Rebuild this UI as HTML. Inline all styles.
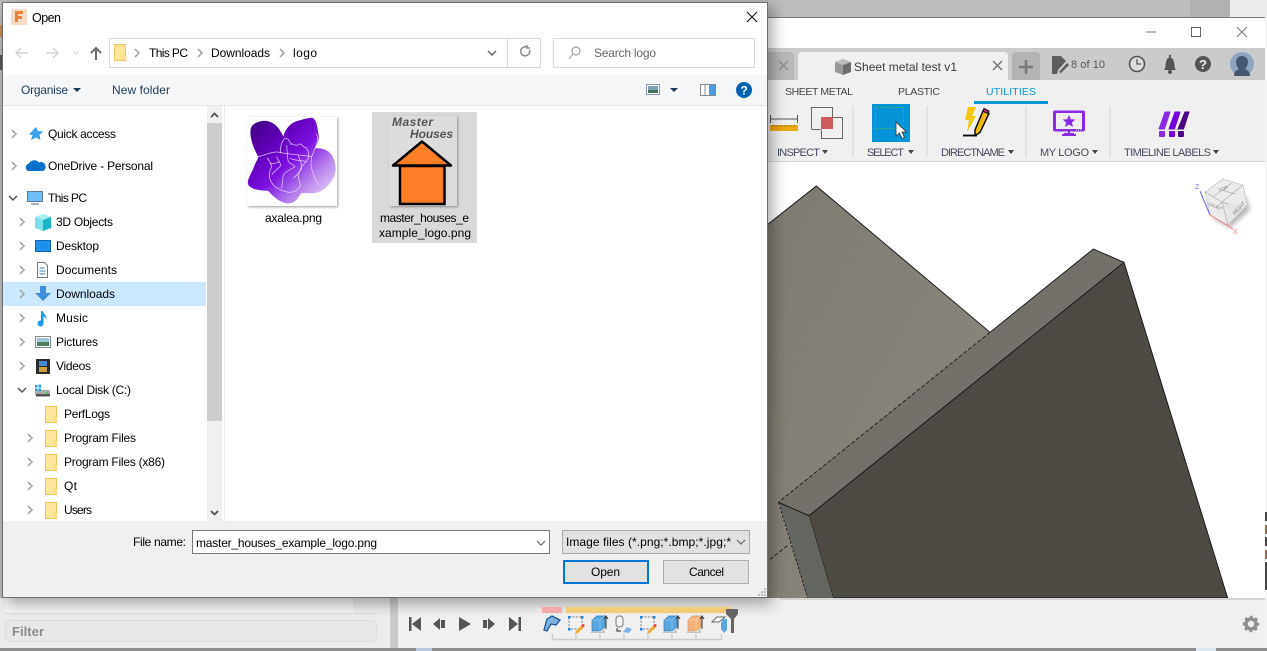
<!DOCTYPE html>
<html><head><meta charset="utf-8"><title>Open</title>
<style>
html,body{margin:0;padding:0;background:#fff;width:1267px;height:651px;overflow:hidden}
svg{display:block}
text{font-family:"Liberation Sans",sans-serif;font-size:12px;fill:#000}
.f{font-size:11px;fill:#444a5c}
</style></head><body>
<svg width="1267" height="651" viewBox="0 0 1267 651" xmlns="http://www.w3.org/2000/svg">
<defs>
<filter id="b7" x="-10%" y="-10%" width="120%" height="120%"><feGaussianBlur stdDeviation="7"/></filter>
<filter id="b1" x="-20%" y="-20%" width="140%" height="140%"><feGaussianBlur stdDeviation="1.200"/></filter>
<filter id="b2" x="-40%" y="-40%" width="180%" height="180%"><feGaussianBlur stdDeviation="2.500"/></filter>
<linearGradient id="fl" x1="0" y1="0" x2="1" y2="1"><stop offset="0" stop-color="#3c007a"/><stop offset=".3" stop-color="#6200bc"/><stop offset=".5" stop-color="#7d10e0"/><stop offset=".72" stop-color="#b785ec"/><stop offset="1" stop-color="#f6eeff"/></linearGradient>
<linearGradient id="pl" x1="0" y1="0" x2="1" y2="1"><stop offset="0" stop-color="#7f7b72"/><stop offset="1" stop-color="#8b887f"/></linearGradient>
<g id="fd"><path d="M.5.5H11.5V16.500H.5Z" fill="#ffe69a" stroke="#eac85e"/><path d="M10 11h2v6h-2z" fill="#fff2c4" stroke="#eac85e" stroke-width=".7"/></g>
<path id="cr" d="M0 0l4 4-4 4" fill="none" stroke="#a6a6a6" stroke-width="1.600"/>
<g id="bx"><path d="M0 4L5 0H13V11L8 15H0Z" fill="#5aa7e0" stroke="#2f7ab8" stroke-width=".7"/><path d="M0 4H8V15M8 4L13 0" fill="none" stroke="#8cc6ef" stroke-width=".7"/><path d="M-1 16H9L13 13V17H-1Z" fill="#c4c4c4"/></g>
<g id="sk"><path d="M1 1H14V13H1Z" fill="none" stroke="#777" stroke-dasharray="2 1.400"/><path d="M0 0h2.500v2.500H0zM13 0h2.500v2.500H13zM0 12h2.500v2.500H0z" fill="#1b86e0"/><path d="M8 15L14 9l2 2-6 6-3 1z" fill="#f0a732"/><circle cx="15" cy="9.500" r="1.500" fill="#e8413c"/></g>
</defs>

<!-- background behind -->
<rect width="1267" height="651" fill="#b9b9b9"/>
<rect x="0" y="0" width="1190" height="18" fill="#bcbcbc"/>
<rect x="1190" y="0" width="40" height="18" fill="#b0b0b0"/>
<rect x="1230" y="0" width="37" height="18" fill="#ededed"/>
<rect x="1265" y="18" width="2" height="633" fill="#f4f4f4"/>
<rect x="1265" y="512" width="2" height="9" fill="#444"/><rect x="1265" y="525" width="2" height="9" fill="#a8654a"/><rect x="1265" y="537" width="2" height="9" fill="#444"/><rect x="1265" y="550" width="2" height="9" fill="#a8654a"/><rect x="1265" y="562" width="2" height="28" fill="#444"/>
<rect x="0" y="55" width="2" height="15" fill="#555"/><rect x="0" y="25" width="2" height="12" fill="#c98a4b"/>

<!-- Fusion window -->
<rect x="767" y="17" width="498" height="631" fill="#fff"/>
<rect x="767" y="17" width="498" height="1" fill="#777"/>
<path d="M1146 32h10" stroke="#777" stroke-width="1"/>
<rect x="1191.500" y="27.500" width="9" height="9" fill="none" stroke="#666"/>
<path d="M1237 27l10 10M1247 27l-10 10" stroke="#777" stroke-width="1"/>
<rect x="767" y="48" width="498" height="32" fill="#cbcbcb"/>
<path d="M767 52h23a4 4 0 0 1 4 4v24h-27z" fill="#b7b7b7"/>
<path d="M779 61l9 9M788 61l-9 9" stroke="#8e8e8e" stroke-width="1.500"/>
<path d="M798 80V56a4 4 0 0 1 4-4h202a4 4 0 0 1 4 4v24z" fill="#f0f0f0"/>
<path d="M835 62l8-3 8 3v10l-8 3-8-3z" fill="#9a9a9a"/><path d="M843 65l8-3v10l-8 3z" fill="#6e6e6e"/><path d="M835 62l8-3 8 3-8 3z" fill="#bdbdbd"/>
<text x="854" y="71" textLength="103" style="fill:#3c3c3c">Sheet metal test v1</text>
<path d="M993 61l9 9M1002 61l-9 9" stroke="#777" stroke-width="1.500"/>
<path d="M1012 80V56a4 4 0 0 1 4-4h20a4 4 0 0 1 4 4v24z" fill="#b3b3b3"/>
<path d="M1026 60v14M1019 67h14" stroke="#7a7a7a" stroke-width="2.500"/>
<path d="M1052 56h9l5 5-8 9-1 4h-5z" fill="#5e5e5e"/><path d="M1059 72l8-9 2 2-8 8z" fill="#5e5e5e"/>
<text x="1071" y="68" textLength="34" style="font-size:11px;fill:#555">8 of 10</text>
<circle cx="1137" cy="64" r="7.500" fill="#dcdcdc" stroke="#555" stroke-width="1.600"/><path d="M1137 59v5h4" fill="none" stroke="#555" stroke-width="1.300"/>
<path d="M1164 70c2-2 1-4 2-8 .5-3 2-4 4-5 2 1 3.500 2 4 5 1 4 0 6 2 8z" fill="#555"/><circle cx="1170" cy="72" r="2" fill="#555"/><circle cx="1170" cy="56" r="1.200" fill="#555"/>
<circle cx="1203" cy="64" r="8" fill="#555"/><text x="1199" y="69" style="font-size:13px;font-weight:bold;fill:#eee">?</text>
<circle cx="1242" cy="64" r="12" fill="#8fa4bf"/><path d="M1234 76c0-5 3-6 5-7-2-2-3-5-3-7 0-4 3-6 6-6s6 2 6 6c0 2-1 5-3 7 2 1 5 2 5 7z" fill="#45566f"/>

<!-- Toolbar -->
<rect x="767" y="80" width="498" height="81" fill="#f0f0f0"/>
<rect x="767" y="161" width="498" height="1" fill="#d8d8d8"/>
<text x="785" y="95" textLength="68" style="font-size:10.500px;fill:#444">SHEET METAL</text>
<text x="898" y="95" textLength="42" style="font-size:10.500px;fill:#444">PLASTIC</text>
<text x="986" y="95" textLength="50" style="font-size:10.500px;fill:#0696d7">UTILITIES</text>
<rect x="974" y="101" width="74" height="3" fill="#0696d7"/>
<path d="M853 106v51M927 106v51M1026 106v51M1110 106v51" stroke="#dcdcdc" stroke-width="1.500"/>
<path d="M770.500 115v8M797.500 115v8M771 119h26" stroke="#555" stroke-width="1" fill="none"/>
<rect x="770" y="125" width="28" height="6" fill="#f0a90f"/>
<path d="M773 125v2M776 125v2M779 125v2M782 125v2M785 125v2M788 125v2M791 125v2M794 125v2" stroke="#8a6500" stroke-width=".7"/>
<path d="M811.500 129V107.500H832.500V117M821 129.500H811.500M842.500 117.500H833M842.500 117.500V138.500H821.500V130" fill="none" stroke="#666"/>
<rect x="821" y="117" width="12" height="12" fill="#cd5c5c"/>
<rect x="872" y="104" width="38" height="38" fill="#0696d7"/>
<rect x="875.500" y="107.500" width="28" height="21" fill="none" stroke="#3cb56c" stroke-dasharray="3 2"/>
<path d="M896 122v14l3.500-3 2.500 5.500 2.500-1-2.500-5.500h4.500z" fill="#fff" stroke="#333" stroke-width=".8"/>
<path d="M968 107h8l-4 9h4l-9 16 2-12h-4z" fill="#f6c70a"/>
<path d="M975 130l8-19 6 2.500-9 19-5 3z" fill="#f2b90c" stroke="#111" stroke-width="1.500"/><path d="M983 111l1-2.500 5 2.500-1 2.500z" fill="#d0128c" stroke="#111"/>
<path d="M963 135.500h14" stroke="#000" stroke-width="1.800"/>
<path d="M1055 110.500h28a2 2 0 0 1 2 2v17a2 2 0 0 1-2 2h-28a2 2 0 0 1-2-2v-17a2 2 0 0 1 2-2zM1056 113v16h26v-16z" fill="#8a2be2" fill-rule="evenodd"/>
<path d="M1069 131v3M1062 135h14" stroke="#8a2be2" stroke-width="2"/><path d="M1064 133h10v2h-10z" fill="#8a2be2"/>
<path d="M1069 115l1.800 4.200 4.600.3-3.500 3 1.100 4.500-4-2.400-4 2.400 1.100-4.500-3.500-3 4.600-.3z" fill="#8a2be2"/>
<path d="M1076 130h5" stroke="#fff" stroke-dasharray="1 1"/>
<path d="M1165 112h5l-5.500 17h-5.500z" fill="#8a2be2" stroke="#8a2be2" stroke-linejoin="round"/>
<path d="M1175 112h5l-5.500 17h-5.500z" fill="#7600dd" stroke="#7600dd" stroke-linejoin="round"/>
<path d="M1185 112h4l-5.500 17h-5.500z" fill="#4b0082" stroke="#4b0082" stroke-linejoin="round"/>
<rect x="1159" y="131" width="6" height="6" rx="1" fill="#8a2be2"/><rect x="1169" y="131" width="6" height="6" rx="1" fill="#7600dd"/><rect x="1178" y="131" width="6" height="6" rx="1" fill="#4b0082"/>
<text class="f" x="777" y="156" textLength="43">INSPECT</text><path d="M822 150h6l-3 4z" fill="#444"/>
<text class="f" x="867" y="156" textLength="37">SELECT</text><path d="M908 150h6l-3 4z" fill="#444"/>
<text class="f" x="941" y="156" textLength="64">DIRECTNAME</text><path d="M1008 150h6l-3 4z" fill="#444"/>
<text class="f" x="1040" y="156" textLength="49">MY LOGO</text><path d="M1092 150h6l-3 4z" fill="#444"/>
<text class="f" x="1124" y="156" textLength="87">TIMELINE LABELS</text><path d="M1213 150h6l-3 4z" fill="#444"/>

<!-- Model -->
<path d="M767 225L816.300 186 990 332.300 778 503 808 598H767Z" fill="url(#pl)"/>
<path d="M767 225L816.300 186 990 332.300" fill="none" stroke="#111" stroke-width=".9"/>
<path d="M778.300 502.300L1093.300 249 1124 262.300 809 515.700Z" fill="#74716a"/>
<path d="M1124 262.300L809 515.700 833.300 598H1227.700Z" fill="#4e4b44" stroke="#111" stroke-width=".9"/>
<path d="M778.300 502.300L809 515.700 833.300 598H807.700Z" fill="#636560"/>
<path d="M990 332.300L1093.300 249 1124 262.300" fill="none" stroke="#111" stroke-width=".9"/>
<path d="M990 332.300L778.300 502.300" fill="none" stroke="#111" stroke-width=".8" stroke-dasharray="4 2"/>
<path d="M778.300 502.300L809 515.700" stroke="#111" stroke-width=".9"/>
<path d="M778.300 502.300L807.700 598" stroke="#111" stroke-width=".8" stroke-dasharray="3 1.500"/>
<path d="M770 559.300L788.300 545" stroke="#111" stroke-width=".8" stroke-dasharray="4 2"/>

<!-- view cube -->
<path d="M1212 218L1230 228 1250 210 1246 196Z" fill="#000" opacity=".28" filter="url(#b2)"/>
<path d="M1205 192L1223 179 1243 185 1247 205 1228 225 1210 215Z" fill="#ececec" stroke="#b5b5b5" stroke-width=".8" stroke-dasharray="2.500 1"/>
<path d="M1222 202L1247 205 1228 225Z" fill="#e2e2e2" opacity=".7"/>
<path d="M1205 192L1222 202 1243 185M1222 202L1228 225M1214 196L1232 183M1222 190L1235 194M1216 208L1222 202 1228 204" fill="none" stroke="#aaa" stroke-width=".7"/>
<path d="M1200 191L1210 215" fill="none" stroke="#6f6fe8" stroke-width="1.100"/>
<path d="M1210 215L1233 229" stroke="#ef8f8f" stroke-width="1.100"/>
<text x="1195" y="189" style="font-size:7px;font-weight:bold;fill:#9a9af2">Z</text>
<text x="1233" y="234" style="font-size:7px;font-weight:bold;fill:#f5a8a8">X</text>
<text x="1229" y="212" transform="rotate(-48 1236 207)" textLength="16" style="font-size:5.500px;fill:#888;font-style:italic">RIGHT</text>
<text x="1207" y="208" transform="rotate(22 1215 208)" textLength="15" style="font-size:4.500px;fill:#888">FRONT</text>
<text x="1218" y="191" transform="rotate(-20 1222 189)" style="font-size:5px;fill:#888">TOP</text>

<!-- left lower panel -->
<rect x="0" y="598" width="390" height="50" fill="#ececec"/>
<rect x="5" y="598" width="348" height="15" fill="#f6f6f6"/>
<rect x="5" y="613" width="372" height="1" fill="#dcdcdc"/>
<rect x="5.500" y="620.500" width="371" height="21" rx="4" fill="#e8e8e8" stroke="#dedede"/>
<text x="12" y="636" textLength="32" style="font-weight:bold;fill:#8c8c8c;font-size:13px">Filter</text>
<rect x="390" y="598" width="8" height="50" fill="#c9c9c9"/>

<!-- timeline panel -->
<rect x="398" y="598" width="867" height="50" fill="#f0f0f0"/>
<rect x="780" y="598" width="485" height="2" fill="#d4d4d4"/>
<rect y="648" width="1267" height="3" fill="#8c8c8c"/>
<rect x="1196" y="648" width="20" height="3" fill="#dfe9f3"/>
<rect x="416" y="648" width="16" height="3" fill="#b9c8dc"/>
<!-- gear -->
<circle cx="1251" cy="624" r="5" fill="none" stroke="#8f8f8f" stroke-width="3.600"/>
<circle cx="1251" cy="624" r="7.300" fill="none" stroke="#8f8f8f" stroke-width="2" stroke-dasharray="2.870 2.870" stroke-dashoffset="1.430"/>

<!-- dialog shadow -->
<rect x="6" y="6" width="767" height="598" fill="#000" opacity=".32" filter="url(#b7)"/>

<!-- timeline content above shadow -->
<g fill="#555">
<path d="M409 617h2.500v14H409zM421 617v14l-9-7z"/>
<path d="M433 624l7-6v12zM441 620h4v8h-4z"/>
<path d="M459 617l12 7-12 7z"/>
<path d="M483 620h4v8h-4zM488 618l7 6-7 6z"/>
<path d="M509 617l9 7-9 7zM518.500 617h2.500v14h-2.500z"/>
</g>
<rect x="542" y="607" width="20" height="6" fill="#f4a9ab"/>
<rect x="566" y="607" width="165" height="6" fill="#f0ce78"/>
<path d="M726 609h12v5l-4 5v14h-3V619l-5-5z" fill="#666"/>
<path d="M544 630l3-11 5-3 8 4-4 5-5-1-4 7z" fill="#7fb3e2" stroke="#1f5796" stroke-width="1.300"/>
<use href="#sk" x="568" y="616"/>
<use href="#bx" x="592" y="616"/><path d="M606 617v12M604 619l2-3 2 3" stroke="#333" fill="none"/>
<rect x="616" y="616" width="7" height="11" rx="3" fill="#f2f2f2" stroke="#777"/><path d="M617 628v3h4" fill="none" stroke="#222"/><path d="M623 632l4-5 5 2-3 4z" fill="#7fb3e2"/>
<use href="#sk" x="640" y="616"/>
<use href="#bx" x="664" y="616"/><path d="M678 617v12M676 619l2-3 2 3" stroke="#333" fill="none"/>
<g transform="translate(688 616)"><path d="M0 4L5 0H13V11L8 15H0Z" fill="#f7b27a" stroke="#d0905a" stroke-width=".7"/><path d="M0 4H8V15M8 4L13 0" fill="none" stroke="#fbd3ae" stroke-width=".7"/><path d="M-1 16H9L13 13V17H-1Z" fill="#c4c4c4"/></g><path d="M702 617v12M700 619l2-3 2 3" stroke="#333" fill="none"/>
<path d="M712 622l5-5h8l-6 5z" fill="#fff" stroke="#666"/><path d="M723 619h4v11l-3 3-3-4v-6z" fill="#5aa7e0"/>
<path d="M552.500 634v5.500H721.500V634M576 634v5M600 634v5M624 634v5M648 634v5M672 634v5M696 634v5" fill="none" stroke="#cdcdcd" stroke-width="1.500"/>

<!-- DIALOG -->
<rect x="2.500" y="2.500" width="765" height="595" fill="#fff" stroke="#6e6e6e"/>
<rect x="11" y="9" width="16" height="16" fill="#f6dcc4"/>
<path d="M15 11h8v3h-5v2h4v3h-4v3h-3z" fill="#e8833a"/>
<text x="32" y="22" textLength="29" style="font-size:12.500px">Open</text>
<path d="M747 12l10 10M757 12l-10 10" stroke="#111" stroke-width="1.100"/>
<path d="M28 53H16M21 48l-5 5 5 5" fill="none" stroke="#d3d3d3" stroke-width="1.500"/>
<path d="M46 53h12M53 48l5 5-5 5" fill="none" stroke="#d3d3d3" stroke-width="1.500"/>
<path d="M73 51l3 3 3-3" fill="none" stroke="#d3d3d3"/>
<path d="M96 60V48M91 53l5-5 5 5" fill="none" stroke="#6d6d6d" stroke-width="2"/>
<rect x="109.500" y="38.500" width="431" height="29" fill="#fff" stroke="#d9d9d9"/>
<path d="M507.500 38v30" stroke="#d9d9d9"/>
<use href="#fd" x="114" y="44"/>
<use href="#cr" x="135" y="49"/><text x="149" y="57" textLength="39">This PC</text>
<use href="#cr" x="198" y="49"/><text x="211" y="57" textLength="59">Downloads</text>
<use href="#cr" x="280" y="49"/><text x="293" y="57" textLength="24">logo</text>
<path d="M488 51l4 4 4-4" fill="none" stroke="#666" stroke-width="1.500"/>
<path d="M529.500 50a4.500 4.500 0 1 1-2.500-2.800M527 45v3h3" fill="none" stroke="#888" stroke-width="1.500"/>
<rect x="553.500" y="38.500" width="201" height="29" fill="#fff" stroke="#d9d9d9"/>
<circle cx="576" cy="51" r="4" fill="none" stroke="#888"/><path d="M573 54l-4 5" stroke="#888"/>
<text x="594" y="57" textLength="62" style="fill:#666">Search logo</text>
<rect x="3" y="75" width="764" height="30" fill="#f5f6f7"/>
<rect x="3" y="105" width="764" height="1" fill="#e5e5e5"/>
<text x="21" y="94" textLength="47" style="fill:#1e395b">Organise</text><path d="M73 88h8l-4 4z" fill="#1e395b"/>
<text x="112" y="94" textLength="58" style="fill:#1e395b">New folder</text>
<rect x="646.500" y="84.500" width="13" height="10" fill="#fff" stroke="#8a98a8"/><rect x="648" y="86" width="10" height="7" fill="#7ca4b8"/><rect x="648" y="90" width="10" height="3" fill="#3c7a5a"/>
<path d="M670 88h8l-4 4z" fill="#1e395b"/>
<rect x="700.500" y="84.500" width="15" height="11" fill="#fff" stroke="#8a8a8a"/><rect x="709" y="85" width="6" height="10" fill="#4a9be0"/><path d="M705 85v10" stroke="#8a8a8a"/>
<circle cx="744" cy="90" r="8" fill="#0063b1"/><text x="740.500" y="94.500" style="font-weight:bold;font-size:12px;fill:#fff">?</text>

<!-- tree -->
<rect x="3" y="282" width="203" height="24" fill="#cce8ff"/>
<use href="#cr" x="12" y="130"/><use href="#cr" x="12" y="162"/>
<path d="M9 196l4 4 4-4" fill="none" stroke="#555" stroke-width="1.500"/>
<use href="#cr" x="20" y="218"/><use href="#cr" x="20" y="242"/><use href="#cr" x="20" y="266"/><use href="#cr" x="20" y="290"/><use href="#cr" x="20" y="314"/><use href="#cr" x="20" y="338"/><use href="#cr" x="20" y="362"/>
<path d="M18 388l4 4 4-4" fill="none" stroke="#555" stroke-width="1.500"/>
<use href="#cr" x="28" y="434"/><use href="#cr" x="28" y="458"/><use href="#cr" x="28" y="482"/><use href="#cr" x="28" y="506"/>
<path d="M36 127l2 4 5 .5-3.500 3.500 1 5-4.500-2.500-5 2.500 1.500-5-3.500-.5z" fill="#3aa0e8"/>
<path d="M28 171a4 4 0 0 1 1-7.500 6 6 0 0 1 10-1 4.500 4.500 0 0 1 4 8.500z" fill="#0a6fc8"/>
<rect x="27.500" y="191.500" width="15" height="10" fill="#6cc0f5" stroke="#5a7a94"/><path d="M31 204h8" stroke="#8a9bad" stroke-width="1.500"/>
<path d="M43 214l8 3v11l-8 3z" fill="#1bb5c8"/><path d="M43 214l-8 3v11l8 3z" fill="#7ee0ea"/><path d="M35 217l8 3 8-3-8-3z" fill="#a8eef2"/>
<rect x="35.500" y="240.500" width="15" height="11" fill="#1e90e8" stroke="#1466b0"/>
<path d="M37.500 262.500h7l3 3v12h-10z" fill="#fff" stroke="#777"/><path d="M39.500 268h5M39.500 271h6M39.500 274h6" stroke="#3a80c0" stroke-width=".9"/>
<path d="M40 286h6v7h5l-8 8-8-8h5z" fill="#3d8fdc"/>
<path d="M41 311h1.500c.5 3 5 4 4 9-.5-2-2-3.500-3-3.500V323a3 3 0 1 1-2.500-2.500z" fill="#1a9be8"/>
<rect x="35.500" y="336.500" width="15" height="11" fill="#fff" stroke="#888"/><rect x="37" y="338" width="12" height="8" fill="#9cc6d6"/><rect x="37" y="342" width="12" height="4" fill="#4f7f5f"/>
<rect x="36" y="359" width="14" height="15" fill="#2a2a2a"/><rect x="39" y="361" width="8" height="5" fill="#4a86d0"/><rect x="39" y="367" width="8" height="5" fill="#c9a13a"/>
<rect x="35.500" y="390.500" width="14" height="5" rx="1" fill="#aeaeae" stroke="#777" stroke-width=".5"/><rect x="36" y="394" width="14" height="2.500" fill="#555"/><rect x="46" y="392" width="2" height="1.500" fill="#3cd04a"/>
<path d="M35 385h2.500v2.500H35zM38.500 384.500H41v3h-2.500zM35 388.500h2.500V391H35zM38.500 388.500H41V391h-2.500z" fill="#1ea0e8"/>
<use href="#fd" x="45" y="406"/><use href="#fd" x="45" y="430"/><use href="#fd" x="45" y="454"/><use href="#fd" x="45" y="478"/><use href="#fd" x="45" y="502"/>
<text x="48" y="138" textLength="68">Quick access</text>
<text x="48" y="170" textLength="105">OneDrive - Personal</text>
<text x="48" y="202" textLength="39">This PC</text>
<text x="56" y="226" textLength="57">3D Objects</text>
<text x="56" y="250" textLength="43">Desktop</text>
<text x="56" y="274" textLength="61">Documents</text>
<text x="56" y="298" textLength="59">Downloads</text>
<text x="56" y="322" textLength="32">Music</text>
<text x="56" y="346" textLength="42">Pictures</text>
<text x="56" y="370" textLength="35">Videos</text>
<text x="56" y="394" textLength="75">Local Disk (C:)</text>
<text x="64" y="418" textLength="46">PerfLogs</text>
<text x="64" y="442" textLength="72">Program Files</text>
<text x="64" y="466" textLength="101">Program Files (x86)</text>
<text x="64" y="490" textLength="13">Qt</text>
<text x="64" y="514" textLength="28">Users</text>
<rect x="207" y="106" width="15" height="415" fill="#f0f0f0"/>
<rect x="207" y="123" width="15" height="298" fill="#cdcdcd"/>
<path d="M211 117l3.500-3.500 3.500 3.500" fill="none" stroke="#505050" stroke-width="1.800"/>
<path d="M211 511l3.500 3.500 3.500-3.500" fill="none" stroke="#505050" stroke-width="1.800"/>
<rect x="224" y="106" width="1" height="415" fill="#eaeaea"/>

<!-- file 1 -->
<rect x="248" y="118" width="90" height="89" fill="#000" opacity=".4" filter="url(#b1)"/>
<rect x="247" y="117" width="90" height="89" fill="#fff"/>
<g transform="translate(230 105) scale(.33333)">
<path d="M62 72C66 55 90 45 110 48 135 52 150 72 160 95 165 70 185 52 205 47 225 42 245 35 250 40 262 50 262 70 266 90 268 110 258 125 255 130 280 128 300 138 308 155 318 175 320 195 312 215 300 240 280 258 262 262 245 268 225 262 213 265 205 280 195 295 175 295 150 295 125 270 115 258 95 255 70 258 55 240 48 228 65 205 72 185 78 170 85 160 85 155 70 130 58 95 62 72Z" fill="url(#fl)"/>
<g fill="none" stroke="#eedcff" stroke-width="2.300" stroke-linejoin="round" stroke-opacity=".85">
<path d="M85 155C110 148 130 138 150 142 175 148 215 150 245 155"/>
<path d="M152 145C150 125 155 108 165 100 172 98 178 105 182 118 190 112 198 128 205 118 215 112 222 132 228 128 235 135 238 150 235 158 230 175 215 178 212 192 205 205 202 218 212 240 205 255 195 262 175 262 160 258 140 252 130 240 118 225 112 210 125 185 122 172 115 165 112 158"/>
<path d="M258 85C268 100 262 115 245 155 240 180 245 195 250 205 255 222 262 232 265 240"/>
<path d="M140 155C145 170 155 175 150 185 140 195 130 200 125 210M170 120C172 140 172 160 175 170 182 178 192 180 195 185 180 195 165 200 160 210 158 225 156 240 155 250M205 150C210 170 218 178 215 190 208 205 198 212 190 220M120 175C130 180 140 172 150 170M180 160C195 168 215 165 230 170"/>
</g>
</g>
<text x="265" y="222" textLength="57">axalea.png</text>
<!-- file 2 -->
<rect x="372" y="112" width="105" height="131" fill="#d9d9d9"/>
<rect x="390" y="117" width="68" height="90" fill="#000" opacity=".35" filter="url(#b1)"/>
<rect x="389" y="116" width="68" height="90" fill="#dcdcdc"/>
<text x="392" y="126" textLength="41" style="font-weight:bold;font-style:italic;font-size:12px;fill:#555">Master</text>
<text x="410" y="138" textLength="43" style="font-weight:bold;font-style:italic;font-size:12px;fill:#555">Houses</text>
<path d="M393 165.500L422 141.500 451 165.500Z" fill="#ff7f27" stroke="#000" stroke-width="2.500" stroke-linejoin="round"/>
<rect x="400" y="166" width="44.500" height="38" fill="#ff7f27" stroke="#000" stroke-width="2.500"/>
<text x="380" y="222" textLength="89">master_houses_e</text>
<text x="379" y="237" textLength="92">xample_logo.png</text>

<!-- bottom -->
<rect x="3" y="521" width="764" height="76" fill="#f0f0f0"/>
<text x="133" y="546" textLength="53">File name:</text>
<rect x="192.500" y="530.500" width="357" height="23" fill="#fff" stroke="#7a7a7a"/>
<text x="196" y="547" textLength="181">master_houses_example_logo.png</text>
<path d="M537 541l4 4 4-4" fill="none" stroke="#666" stroke-width="1.200"/>
<rect x="562.500" y="530.500" width="187" height="23" fill="#e1e1e1" stroke="#adadad"/>
<text x="566" y="546" textLength="165">Image files (*.png;*.bmp;*.jpg;*</text>
<path d="M737 540l4 4 4-4" fill="none" stroke="#666" stroke-width="1.200"/>
<rect x="564" y="561" width="84" height="22" fill="#e1e1e1" stroke="#0078d7" stroke-width="2"/>
<text x="591" y="576" textLength="29">Open</text>
<rect x="663.500" y="560.500" width="85" height="23" fill="#e1e1e1" stroke="#adadad"/>
<text x="689" y="576" textLength="35">Cancel</text>
<path d="M764 588h2v2h-2zM761 591h2v2h-2zM764 591h2v2h-2zM758 594h2v2h-2zM761 594h2v2h-2zM764 594h2v2h-2z" fill="#bcbcbc"/>
<rect x="2" y="597" width="766" height="1" fill="#6e6e6e"/>
<rect x="767" y="2" width="1" height="596" fill="#6e6e6e"/>
<rect x="2" y="2" width="1" height="596" fill="#6e6e6e"/>
</svg>
</body></html>
